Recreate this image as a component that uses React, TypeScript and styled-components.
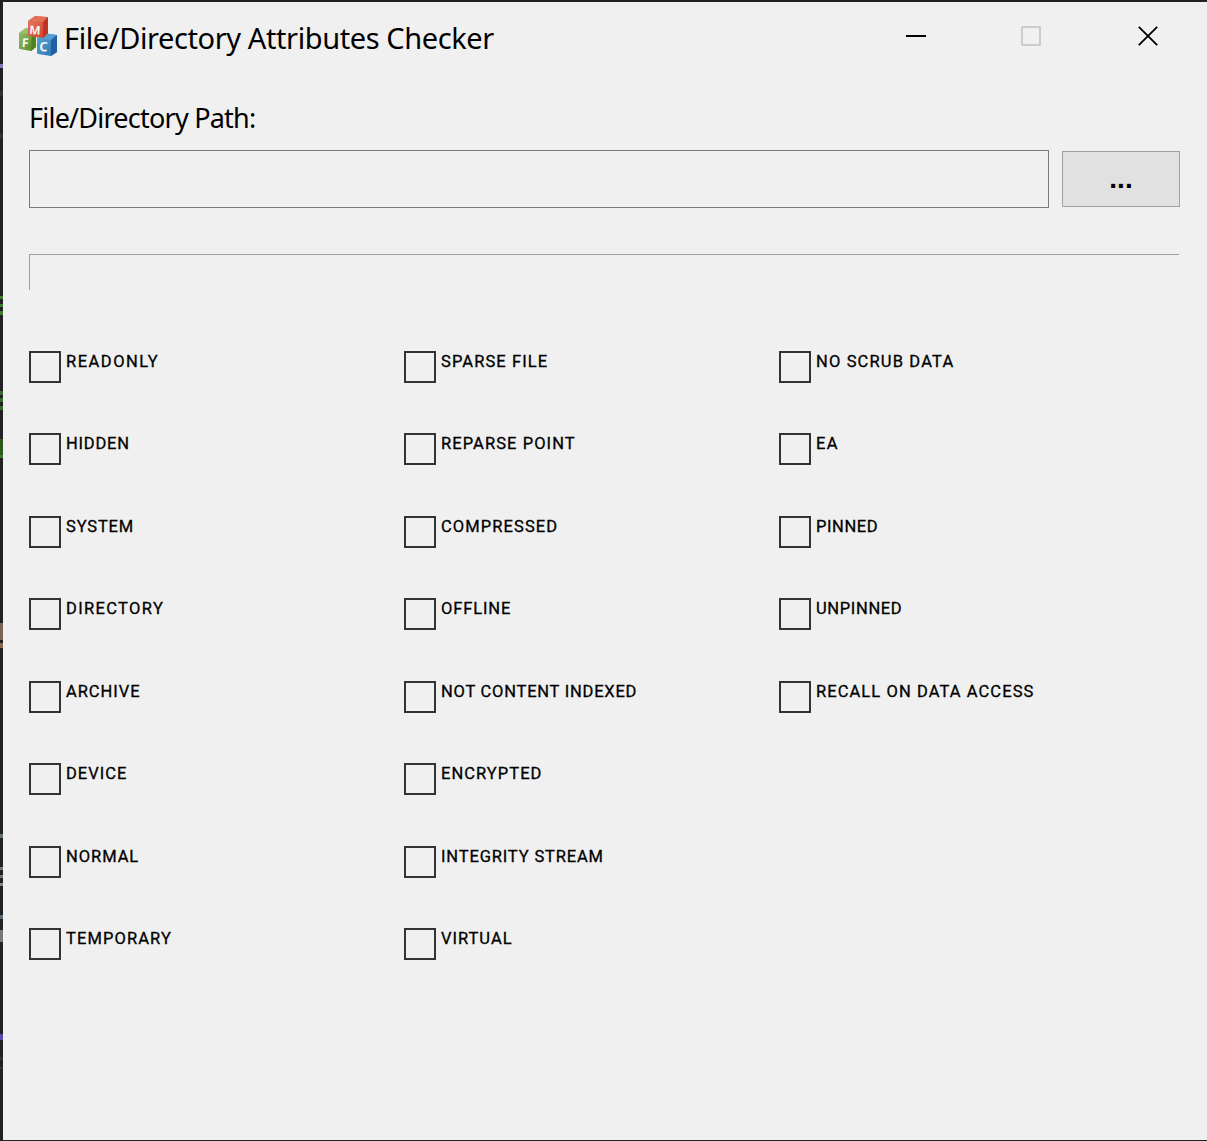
import React from "react";
import styled, { createGlobalStyle } from "styled-components";

const GlobalStyle = createGlobalStyle`
  * { box-sizing: border-box; }
  body { margin: 0; background: #1e1e1e; }
`;

type Mark = [number, number, string];
const editorMarks: Mark[] = [
  [64, 68, "#7f7ac4"], [91, 96, "#323234"], [133, 138, "#323234"],
  [296, 299, "#3c7a2c"], [304, 307, "#3c7a2c"], [311, 315, "#3c7a2c"],
  [391, 395, "#37682c"], [398, 402, "#37682c"], [406, 410, "#37682c"],
  [439, 455, "#2c5a1c"], [455, 458, "#3c7a2c"],
  [623, 640, "#7b6358"], [643, 648, "#8a6a4c"],
  [834, 838, "#66757a"], [867, 870, "#77777a"], [875, 878, "#77777a"],
  [883, 886, "#88888a"], [915, 919, "#5c6c74"], [930, 942, "#77777a"],
  [1034, 1040, "#5a4cae"], [1057, 1060, "#333335"], [1067, 1069, "#333335"],
];

const stripes = editorMarks
  .map(([a, b, c]) => `transparent ${a}px, ${c} ${a}px, ${c} ${b}px, transparent ${b}px`)
  .join(", ");

const Desktop = styled.div`
  width: 1207px;
  height: 1141px;
  padding: 2px 0 1px 3px;
  overflow: hidden;
  background: linear-gradient(to bottom, ${stripes}) 0 0 / 3px 100% no-repeat, #222021;
`;

const Dialog = styled.main`
  height: 1138px;
  background: #f0f0f0;
  color: #000;
  display: flex;
  flex-direction: column;
`;

const TitleBar = styled.header`
  height: 68px;
  flex: none;
  display: flex;
  align-items: center;
  padding-left: 15px;
`;

const Title = styled.h1`
  margin: 3px 0 0 6px;
  flex: 1;
  font: 400 29px/40px "Noto Sans", sans-serif;
  letter-spacing: -0.4px;
  white-space: nowrap;
`;

const WindowButton = styled.button<{ $width: number; $muted?: boolean }>`
  width: ${(p) => p.$width}px;
  height: 68px;
  padding: 0;
  border: 0;
  background: none;
  color: ${(p) => (p.$muted ? "#ccc" : "#000")};
  display: flex;
  align-items: center;
  justify-content: center;
`;

const Body = styled.section`
  padding: 28px 27px 0 26px;
`;

const PathLabel = styled.label`
  display: block;
  height: 40px;
  font: 400 27px/40px "Noto Sans", sans-serif;
  letter-spacing: -0.77px;
  white-space: nowrap;
`;

const PathRow = styled.div`
  display: flex;
  align-items: center;
  gap: 13px;
  margin-top: 12px;
`;

const PathInput = styled.input`
  width: 1020px;
  height: 58px;
  border: 1px solid #7a7a7a;
  border-radius: 0;
  background: #f0f0f0;
  font: 27px "Noto Sans", sans-serif;
  outline: 0;
`;

const BrowseButton = styled.button`
  width: 118px;
  height: 56px;
  padding: 0;
  border: 1px solid #a0a0a0;
  background: #e1e1e1;
  color: #000;
  font: 700 28px/40px "Liberation Sans", sans-serif;
`;

const ResultFrame = styled.div`
  width: 1150px;
  height: 36px;
  margin-top: 46px;
  border-top: 1px solid #a0a0a0;
  border-left: 1px solid #a0a0a0;
`;

const Attributes = styled.div`
  display: grid;
  grid-auto-flow: column;
  grid-template-columns: repeat(3, 375px);
  grid-template-rows: repeat(4, 82px 83px);
  margin-top: 61px;
`;

const Attribute = styled.label`
  display: flex;
  align-items: flex-start;
  gap: 5px;
`;

const Box = styled.input`
  appearance: none;
  flex: none;
  width: 32px;
  height: 32px;
  margin: 0;
  border: 2px solid #333;
`;

const Caption = styled.span<{ $spacing: number }>`
  padding-top: 1px;
  font: 400 16.5px/20px Roboto, sans-serif;
  letter-spacing: ${(p) => p.$spacing}px;
  -webkit-text-stroke: 0.3px #000;
  white-space: nowrap;
`;

const attributes: [string, number][] = [
  ["READONLY", 1.5], ["HIDDEN", 0.8], ["SYSTEM", 0.85], ["DIRECTORY", 1.35],
  ["ARCHIVE", 0.95], ["DEVICE", 1], ["NORMAL", 0.95], ["TEMPORARY", 1.1],
  ["SPARSE FILE", 1.1], ["REPARSE POINT", 1.08], ["COMPRESSED", 1.1], ["OFFLINE", 0.87],
  ["NOT CONTENT INDEXED", 0.77], ["ENCRYPTED", 1.05], ["INTEGRITY STREAM", 0.85], ["VIRTUAL", 1],
  ["NO SCRUB DATA", 1.15], ["EA", 1.4], ["PINNED", 0.6], ["UNPINNED", 0.65],
  ["RECALL ON DATA ACCESS", 1.08],
];

const MfcLogo = () => (
  <svg width="40" height="42" viewBox="0 0 40 42" fontFamily="Open Sans, sans-serif" fontWeight="700" fill="#f6f4f0">
    <defs>
      <linearGradient id="green" x2="1" y2="1"><stop stopColor="#9cc46c" /><stop offset="1" stopColor="#4d861d" /></linearGradient>
      <linearGradient id="red" x2="1" y2="1"><stop stopColor="#e67a62" /><stop offset="1" stopColor="#cf3d27" /></linearGradient>
      <linearGradient id="blue" x2="1" y2="1"><stop stopColor="#5ba5d6" /><stop offset="1" stopColor="#2870b0" /></linearGradient>
    </defs>
    <path d="M1 18 8 13 18 15V32L13 36 2 34Q1 34 1 33Z" fill="url(#green)" />
    <path d="M1 18 8 13 18 15 14 19Z" fill="#98c266" />
    <path d="M14 19 18 15V32L13 36Z" fill="#4d8122" />
    <path d="M19 23 25 18 39 20V37L33 41 20 39Q19 39 19 38Z" fill="url(#blue)" />
    <path d="M19 23 25 18 39 20 33 25Z" fill="#549fd5" />
    <path d="M33 25 39 20V37L33 41Z" fill="#2060a0" />
    <path d="M10 6 17 1 29 2Q30 2 30 3V18L25 23 11 21Q10 21 10 20Z" fill="url(#red)" />
    <path d="M10 6 17 1 29 2 25 7Z" fill="#e3705a" />
    <path d="M25 7 30 2V18L25 23Z" fill="#c13322" />
    <text x="11" y="19" fontSize="12" transform="rotate(4 11 19)">M</text>
    <text x="3.5" y="32" fontSize="12.5" transform="rotate(4 3 32)">F</text>
    <text x="21" y="36" fontSize="13" transform="rotate(4 21 36)">C</text>
  </svg>
);

export default function App() {
  return (
    <Desktop>
      <GlobalStyle />
      <Dialog>
        <TitleBar>
          <MfcLogo />
          <Title>File/Directory Attributes Checker</Title>
          <WindowButton aria-label="Minimize" $width={114}>
            <svg width="20" height="20"><path d="M0 10H20" stroke="currentColor" strokeWidth="2" /></svg>
          </WindowButton>
          <WindowButton aria-label="Maximize" $width={116} $muted>
            <svg width="20" height="20"><path d="M1 1H19V19H1Z" fill="none" stroke="currentColor" strokeWidth="2" /></svg>
          </WindowButton>
          <WindowButton aria-label="Close" $width={118}>
            <svg width="20" height="20"><path d="M.8.8 19.2 19.2M19.2.8.8 19.2" stroke="currentColor" strokeWidth="1.8" /></svg>
          </WindowButton>
        </TitleBar>
        <Body>
          <PathLabel htmlFor="path">File/Directory Path:</PathLabel>
          <PathRow>
            <PathInput id="path" readOnly />
            <BrowseButton>...</BrowseButton>
          </PathRow>
          <ResultFrame />
          <Attributes>
            {attributes.map(([name, spacing]) => (
              <Attribute key={name}>
                <Box type="checkbox" />
                <Caption $spacing={spacing}>{name}</Caption>
              </Attribute>
            ))}
          </Attributes>
        </Body>
      </Dialog>
    </Desktop>
  );
}
